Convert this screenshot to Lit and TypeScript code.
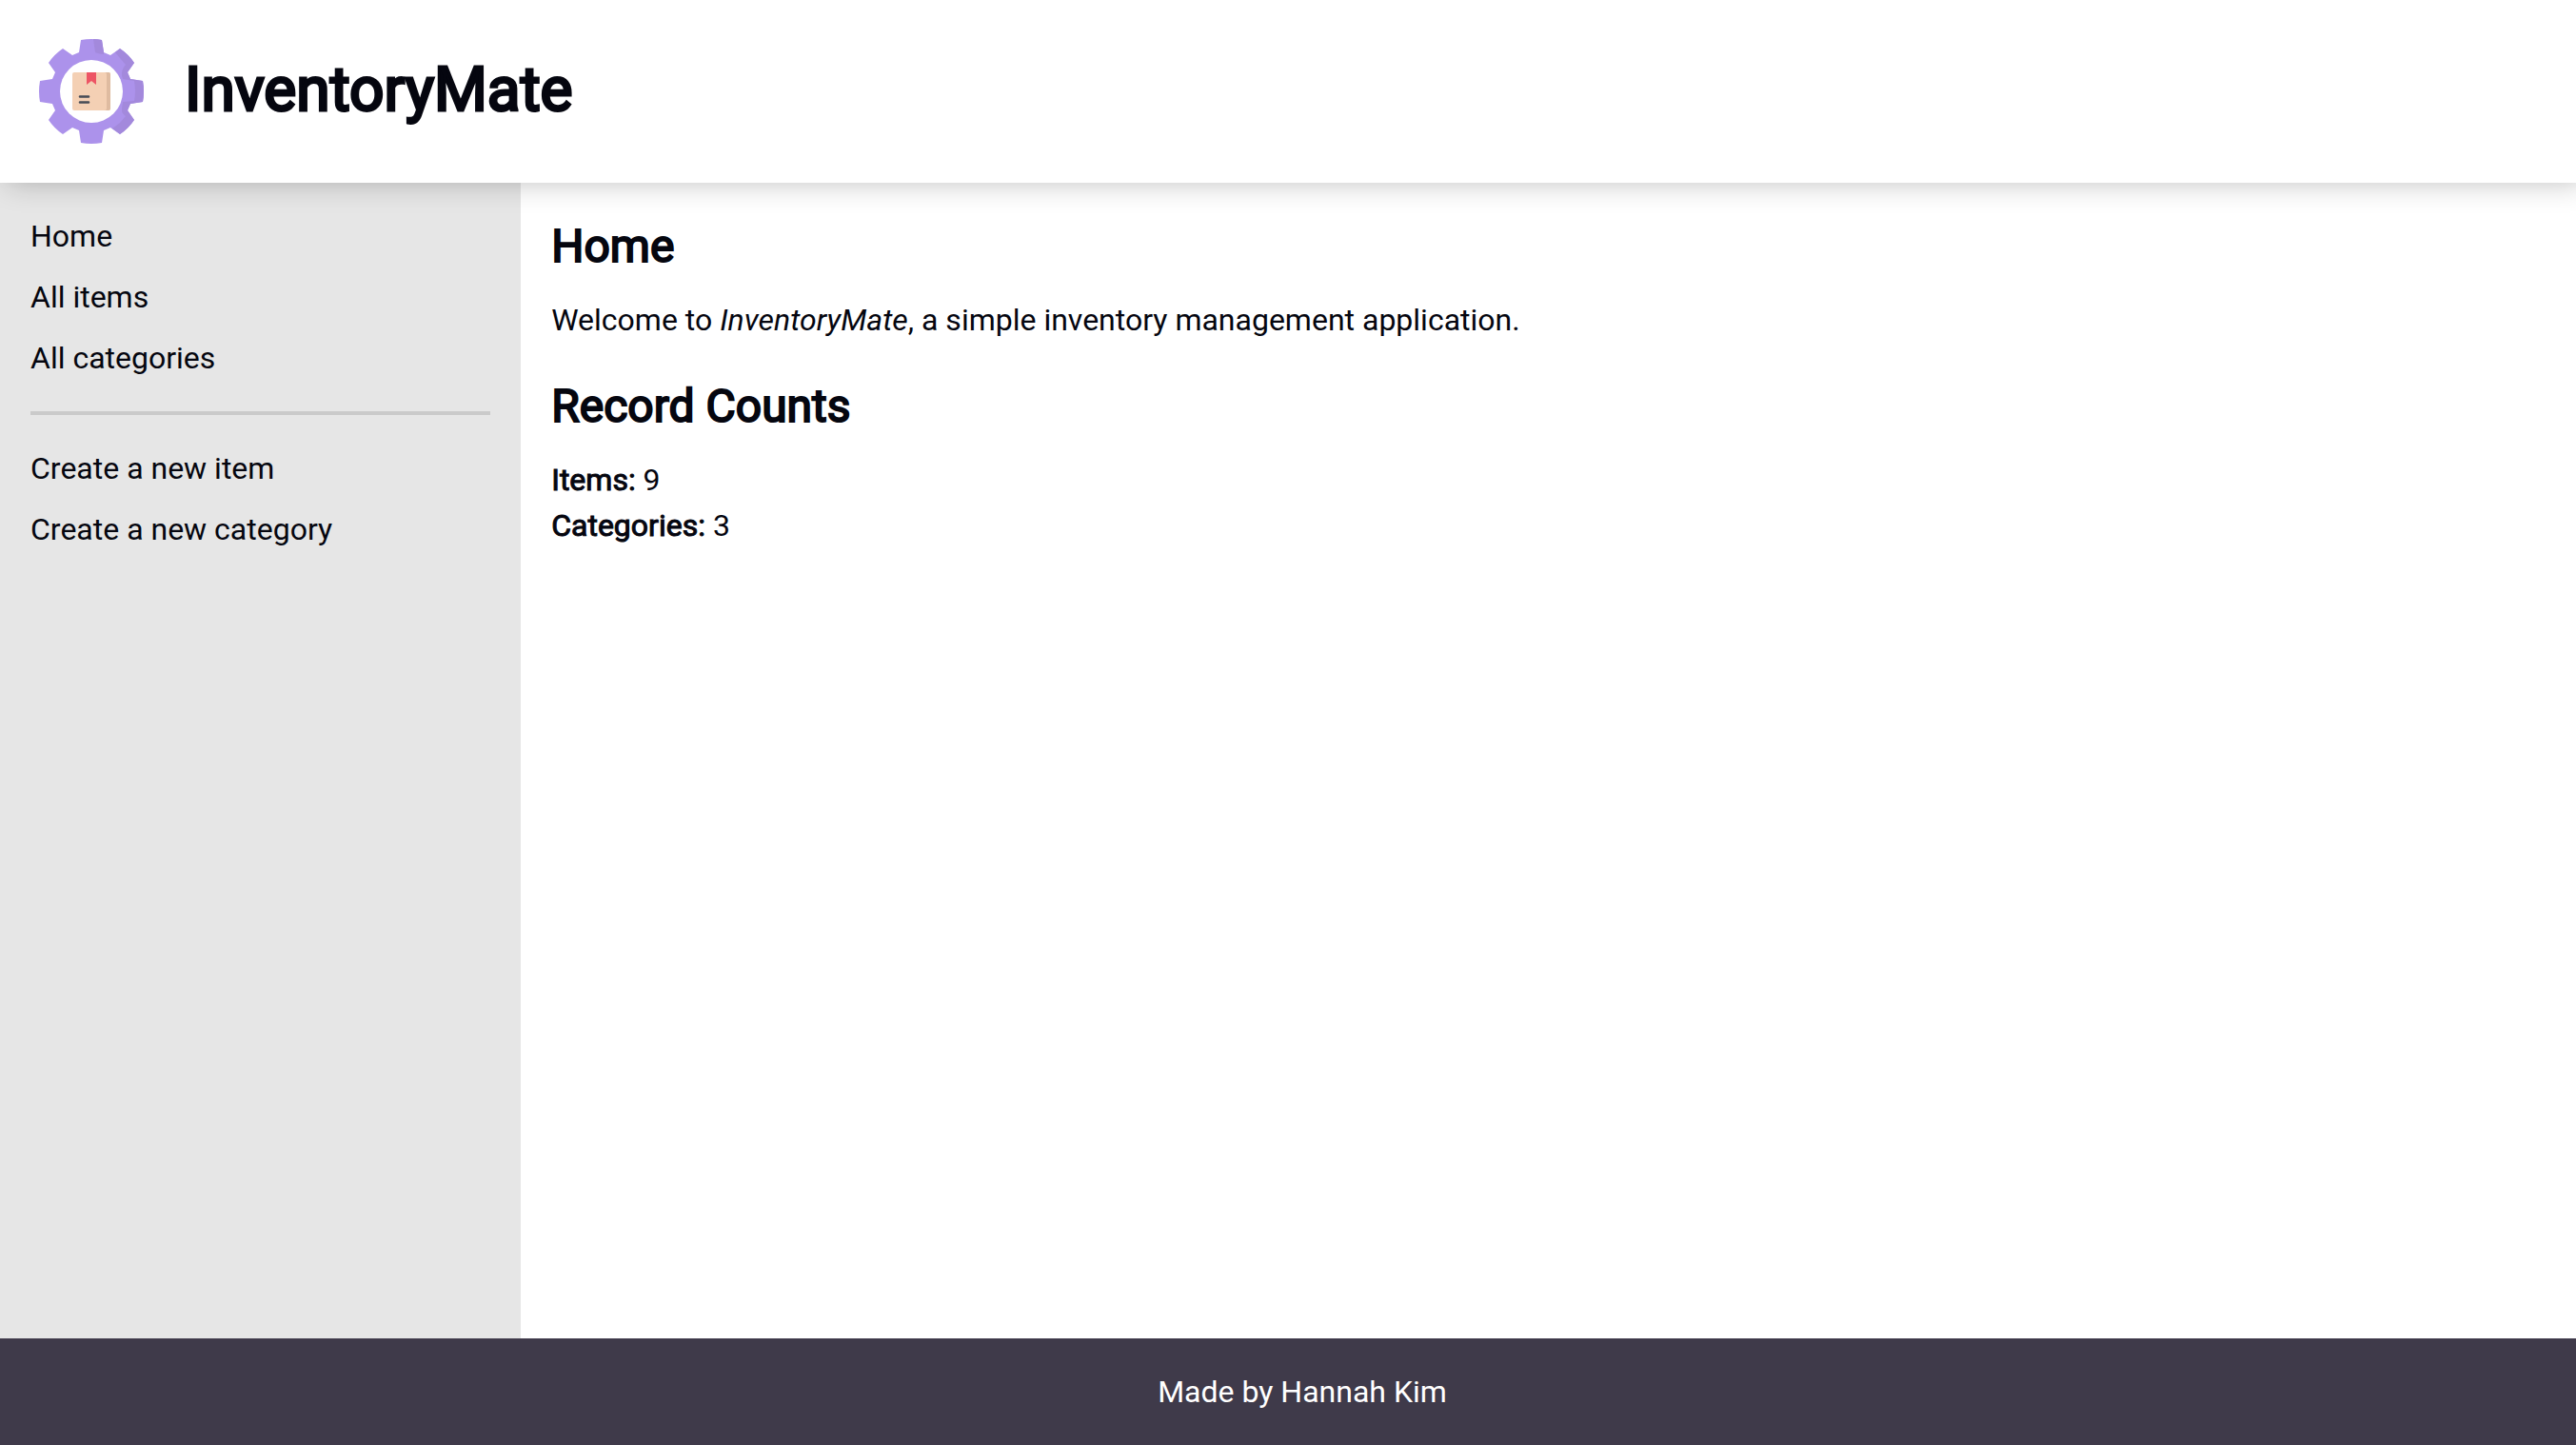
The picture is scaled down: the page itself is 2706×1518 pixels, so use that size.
import { LitElement, html, css, svg } from "lit";
import { customElement, property } from "lit/decorators.js";

const GEAR =
  "M44 1Q55-1 66 1L68 14L75 17L85 10Q94 16 100 25L93 35L96 42L109 44Q111 55 109 66L96 68L93 75L100 85Q94 94 85 100L75 93L68 96L66 109Q55 111 44 109L42 96L35 93L25 100Q16 94 10 85L17 75L14 68L1 66Q-1 55 1 44L14 42L17 35L10 25Q16 16 25 10L35 17L42 14Z";

@customElement("inventory-logo")
export class InventoryLogo extends LitElement {
  static styles = css`
    :host {
      display: block;
      width: 112px;
      height: 112px;
      flex: none;
    }
    .art {
      display: block;
      width: 100%;
      height: 100%;
    }
  `;

  render() {
    return html`<svg class="art" viewBox="-1 -1 112 112" aria-hidden="true">
      ${svg`
        <path d=${GEAR} fill="#ac92eb" />
        <path d="M57 0Q62 0 66 1L68 14L68 16Q63 16 59 14Z" fill="#a389dc" />
        <path d="M80 14L85 10Q94 16 100 25L93 35L96 42L109 44Q111 55 109 66L96 68L93 75L100 85Q94 94 85 100L77 94L85 88L91 81Q87 78 87 76L87 73L88 66L100 65Q102 55 100 44L88 42L87 39Q86 33 91 27L85 20Z" fill="#a389dc" />
        <circle cx="55" cy="55" r="33" fill="#fff" />
        <rect x="35" y="35" width="40" height="40" rx="2" fill="#f4d0b4" />
        <path d="M69 35H73Q75 35 75 37V73Q75 75 73 75H69Q71 75 71 73V37Q71 35 69 35Z" fill="#dfbba0" />
        <path d="M50 35H60V48L55 44L50 48Z" fill="#ed5564" />
        <path d="M43 60.500H52M43 66.500H52" stroke="#464b55" stroke-width="2.600" stroke-linecap="round" />
      `}
    </svg>`;
  }
}

interface NavLink {
  label: string;
  href: string;
}

@customElement("app-root")
export class AppRoot extends LitElement {
  static styles = css`
    :host {
      display: flex;
      flex-direction: column;
      min-height: 100vh;
      overflow-x: clip;
      background: #fff;
      color: #05060f;
      font: 400 32px/48px Roboto, sans-serif;
    }
    .header {
      display: flex;
      align-items: center;
      gap: 42px;
      padding: 40px;
      background: #fff;
      box-shadow: 8px 0 28px rgba(0, 0, 0, 0.25);
      z-index: 1;
    }
    .brand,
    .heading {
      margin: 0;
      font-weight: 400;
    }
    .brand {
      padding-bottom: 2px;
      font-size: 64px;
      line-height: 96px;
      -webkit-text-stroke: 3px currentColor;
    }
    .body {
      flex: 1;
      display: grid;
      grid-template-columns: calc(20% + 6px) 1fr;
    }
    .sidebar {
      padding: 32px;
      background: #e6e6e6;
    }
    .links {
      display: flex;
      flex-direction: column;
      gap: 16px;
      margin: 0;
      padding: 0;
      list-style: none;
    }
    .link {
      color: inherit;
      text-decoration: none;
    }
    .divider {
      height: 4px;
      margin: 32px 0;
      border: 0;
      background: #cacaca;
    }
    .content {
      display: flex;
      flex-direction: column;
      gap: 32px;
      padding: 32px;
    }
    .heading {
      margin-bottom: 18px;
      font-size: 48px;
      line-height: 70px;
      -webkit-text-stroke: 2px currentColor;
    }
    .text {
      margin: 0;
    }
    .strong {
      font-weight: 400;
      -webkit-text-stroke: 1px currentColor;
    }
    .footer {
      padding: 32px 0 32px 30px;
      background: #3f3a4a;
      color: #fff;
      text-align: center;
    }
  `;

  @property({ type: Number }) items = 9;
  @property({ type: Number }) categories = 3;

  private browse: NavLink[] = [
    { label: "Home", href: "#home" },
    { label: "All items", href: "#items" },
    { label: "All categories", href: "#categories" },
  ];

  private create: NavLink[] = [
    { label: "Create a new item", href: "#new-item" },
    { label: "Create a new category", href: "#new-category" },
  ];

  private renderLinks(links: NavLink[]) {
    return html`<ul class="links">
      ${links.map((l) => html`<li><a class="link" href=${l.href}>${l.label}</a></li>`)}
    </ul>`;
  }

  render() {
    return html`
      <header class="header">
        <inventory-logo></inventory-logo>
        <h1 class="brand">InventoryMate</h1>
      </header>
      <div class="body">
        <nav class="sidebar">
          ${this.renderLinks(this.browse)}
          <hr class="divider" />
          ${this.renderLinks(this.create)}
        </nav>
        <main class="content">
          <section>
            <h2 class="heading">Home</h2>
            <p class="text">Welcome to <em>InventoryMate</em>, a simple inventory management application.</p>
          </section>
          <section>
            <h2 class="heading">Record Counts</h2>
            <p class="text"><strong class="strong">Items:</strong> ${this.items}</p>
            <p class="text"><strong class="strong">Categories:</strong> ${this.categories}</p>
          </section>
        </main>
      </div>
      <footer class="footer">Made by Hannah Kim</footer>
    `;
  }
}
